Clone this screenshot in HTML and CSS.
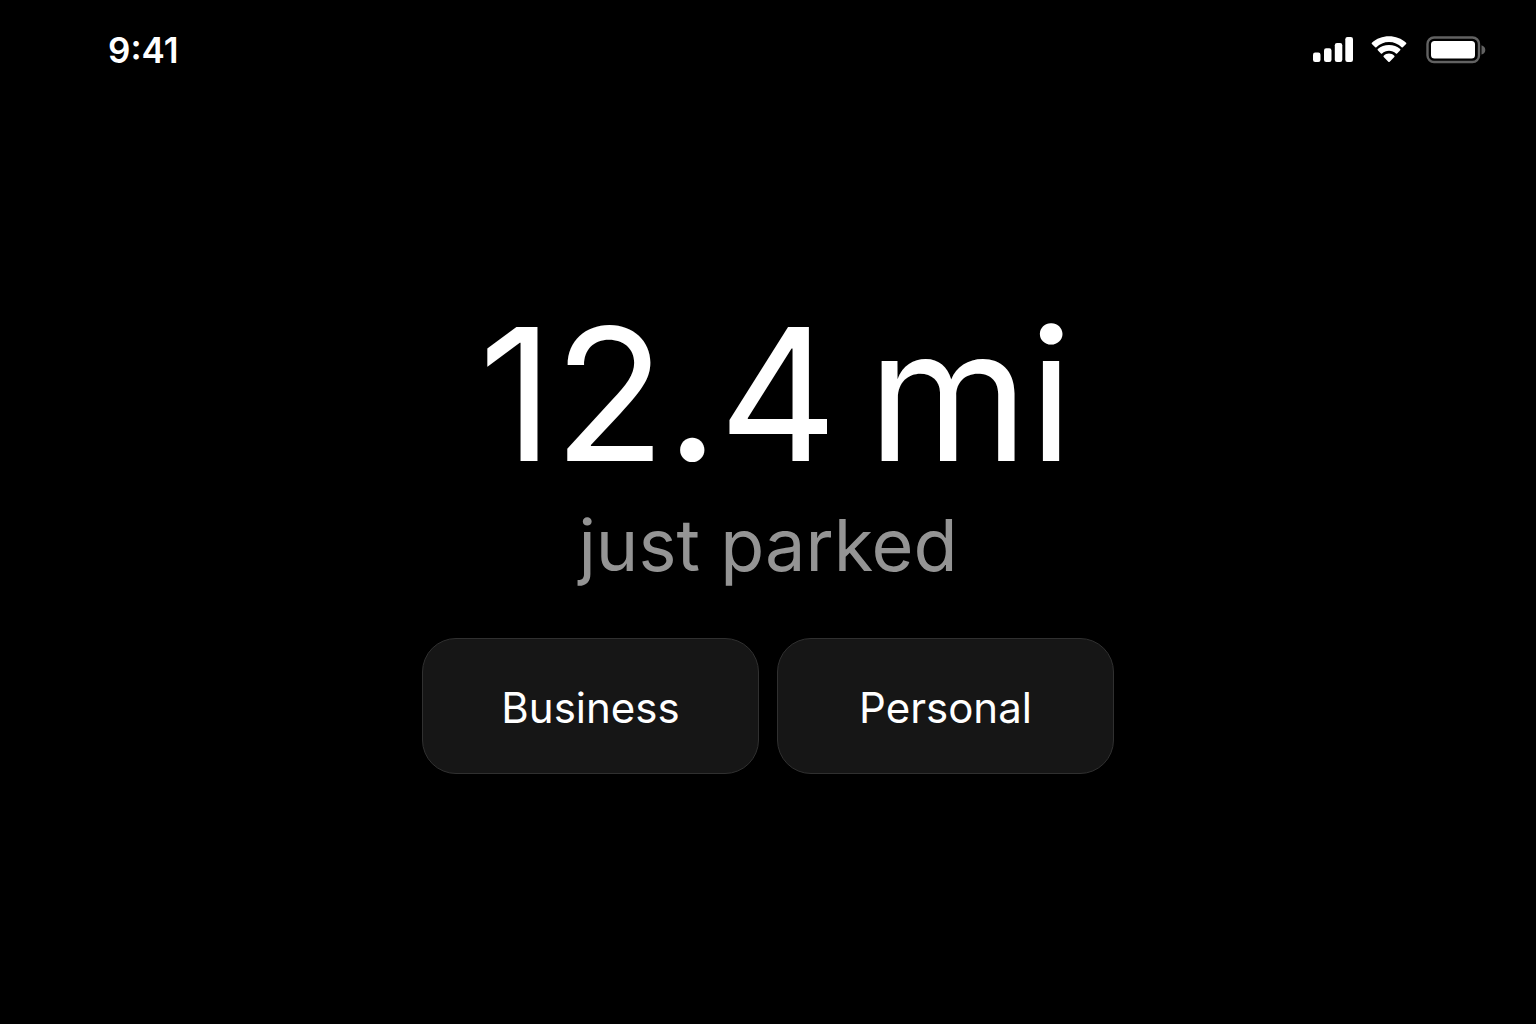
FILE: index.html
```html
<!DOCTYPE html>
<html lang="en">
<head>
<meta charset="utf-8">
<meta name="viewport" content="width=device-width, initial-scale=1">
<title>Trip</title>
<link rel="stylesheet" href="styles.css">
</head>
<body>
<header class="status-bar">
  <time class="clock">9:41</time>
  <div class="indicators">
    <svg class="signal" width="40" height="28" viewBox="0 -1 40 28" role="img" aria-label="Signal">
      <rect x="0" y="15.500" width="7.500" height="9.500" rx="2.200"/>
      <rect x="11" y="11.200" width="7.500" height="13.800" rx="2.200"/>
      <rect x="21.800" y="6" width="7.500" height="19" rx="2.200"/>
      <rect x="32.300" y="0" width="7.700" height="25" rx="2.200"/>
    </svg>
    <svg class="wifi" width="37" height="28" viewBox="1 -1 37 28" role="img" aria-label="Wi-Fi">
      <path d="M19 4.900c5 0 9.300 2 12.600 5.300.4.4.8.4 1.200 0l3.300-3.200c.4-.4.4-.8 0-1.200C31.500 1.600 25.500-.7 19-.7S6.500 1.600 1.900 5.800c-.4.4-.4.8 0 1.200l3.300 3.200c.4.4.8.4 1.200 0C9.700 6.900 14 4.900 19 4.900z"/>
      <path d="M19 13.700c2.700 0 5 1 6.900 2.700.4.3.8.3 1.200 0l3.100-3.100c.4-.4.4-.8 0-1.200C27.200 9.400 23.300 8 19 8S10.800 9.400 7.800 12.100c-.4.4-.4.8 0 1.200l3.100 3.100c.4.3.8.3 1.200 0 1.900-1.700 4.200-2.700 6.900-2.700z"/>
      <path d="M24.300 19.900c.4-.4.4-.8 0-1.200C22.900 17.300 21 16.600 19 16.600s-3.900.7-5.300 2.100c-.4.4-.4.8 0 1.200l4.600 4.800c.4.4 1 .4 1.400 0z"/>
    </svg>
    <svg class="battery" width="60" height="28" viewBox="0 0 60 28" role="img" aria-label="Battery full">
      <rect class="case" x="1.500" y="1.500" width="51.500" height="24.500" rx="6.500"/>
      <rect x="5" y="5" width="44" height="17.500" rx="3.500"/>
      <path class="cap" d="M55.500 9.300c2.200.6 3.800 2.200 3.800 4.600s-1.600 4-3.800 4.600z"/>
    </svg>
  </div>
</header>
<main class="trip">
  <h1 class="distance"><span>12.4</span> <span>mi</span></h1>
  <p class="state">just parked</p>
  <div class="choices">
    <button class="choice" type="button">Business</button>
    <button class="choice" type="button">Personal</button>
  </div>
</main>
</body>
</html>
```

FILE: styles.css
```css
* {
  box-sizing: border-box;
}

body {
  margin: 0;
  min-height: 100vh;
  display: flex;
  flex-direction: column;
  background: #000;
  color: #fff;
  font-family: Inter, "Liberation Sans", sans-serif;
}

.status-bar {
  display: flex;
  justify-content: space-between;
  align-items: center;
  height: 100px;
  padding: 0 50px 0 108px;
}

.clock {
  font-size: 35px;
  line-height: 40px;
  font-weight: 600;
}

.indicators {
  display: flex;
  align-items: center;
  gap: 18px;
  fill: #fff;
}

.battery .case {
  fill: none;
  stroke: #626262;
  stroke-width: 2.4;
}

.battery .cap {
  fill: #626262;
}

.trip {
  flex: 1;
  display: flex;
  flex-direction: column;
  align-items: center;
  padding: 194px 24px 24px;
}

.distance {
  display: flex;
  align-items: baseline;
  gap: 30px;
  margin: 0;
  padding-left: 16px;
  font-size: 184px;
  line-height: 200px;
  font-weight: 400;
}

.state {
  margin: 0;
  font-size: 72px;
  line-height: 102px;
  color: #949494;
}

.choices {
  display: flex;
  gap: 18px;
  margin-top: 42px;
}

.choice {
  width: 337px;
  height: 136px;
  padding: 2px 0 0;
  border: 1px solid #303030;
  border-radius: 34px;
  background: #161616;
  color: #fff;
  font: inherit;
  font-size: 42px;
}
```
